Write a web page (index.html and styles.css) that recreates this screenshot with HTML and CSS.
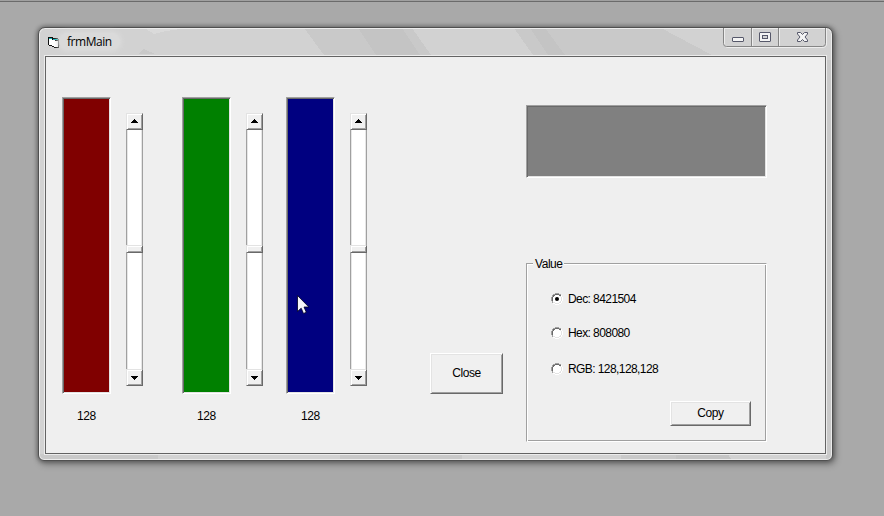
FILE: index.html
```html
<!DOCTYPE html>
<html lang="en">
<head>
<meta charset="utf-8">
<title>frmMain</title>
<link rel="stylesheet" href="styles.css">
</head>
<body>
<main class="window">
  <svg class="glass" width="791" height="430" viewBox="40 29 791 430" shape-rendering="crispEdges" aria-hidden="true">
    <path fill="#c9c9c9" d="M304 28H412L431 55H324ZM514 28H661L712 55H533ZM40 454H158V459H40ZM340 454H462V459H340ZM621 454H728L731 459H621ZM826 60H831V459H826Z"/>
    <path fill="#c4c4c4" d="M358 28H402L420 55H376ZM530 28H545L565 55H548ZM676 454H728L731 459H676Z"/>
    <path fill="#dadada" d="M146 29H180L166 31L154 34Z"/>
    <path fill="#c9c9c9" d="M138 54L144 49L155 54Z"/>
  </svg>
  <header class="titlebar">
    <svg class="app-icon" width="14" height="13" viewBox="0 0 14 13" shape-rendering="crispEdges" aria-hidden="true">
      <path fill="#888" d="M11 6h1v1h1v1h1v1h-1v1h-2z"/>
      <path fill="#111" d="M0 1h5v1h5v1h1v9H6v-1H4v-1H1V9H0z"/>
      <path fill="#fff" d="M1 3h3v1h3v1h3v6H6v-1H4V9H1z"/>
      <path fill="#12b5b5" d="M1 2h3v1H1zM5 3h5v1H5z"/>
    </svg>
    <h1 class="title">frmMain</h1>
    <svg class="caption-buttons" width="104" height="20" viewBox="0 0 104 20" role="img" aria-label="Minimize, maximize, close">
      <path fill="none" stroke="#ededed" d="M1.5 0V15Q1.5 19.5 5 19.5H99Q103.500 19.500 103.500 16V0M29.500 0V18M56.500 0V18"/>
      <path fill="none" stroke="#858585" d="M.5 0V15.500Q.5 18.500 3.500 18.500H99.500Q102.500 18.500 102.500 15.500V0M28.500 0V18M55.500 0V18"/>
      <g fill="#f4f4f4" stroke="#56586a">
        <rect x="9.500" y="9.500" width="11" height="4" rx=".5"/>
        <rect x="36.500" y="4.500" width="11" height="9" rx=".5"/>
        <rect x="39.500" y="7.500" width="5" height="3" fill="#d5d5d5"/>
        <path d="M74.500 4.500h3l2 2 2-2h3v1.500l-2.500 3 2.500 3v1.500h-3l-2-2-2 2h-3V12l2.500-3-2.500-3z"/>
      </g>
    </svg>
  </header>

  <section class="client">
    <div class="channel">
      <div class="swatch red"></div>
      <div class="value">128</div>
    </div>
    <div class="scrollbar">
      <div class="step up"></div><div class="track"><div class="thumb"></div></div><div class="step down"></div>
    </div>
    <div class="channel second">
      <div class="swatch green"></div>
      <div class="value">128</div>
    </div>
    <div class="scrollbar">
      <div class="step up"></div><div class="track"><div class="thumb"></div></div><div class="step down"></div>
    </div>
    <div class="channel third">
      <div class="swatch blue">
        <svg class="cursor" width="13" height="20" viewBox="0 0 13 20" aria-hidden="true">
          <path fill="#f6f6fa" stroke="#000020" stroke-width=".8" d="M.5.5V16.500L4.200 13.200 6.500 18.500 9.300 17.300 7 12H11.800Z"/>
        </svg>
      </div>
      <div class="value">128</div>
    </div>
    <div class="scrollbar">
      <div class="step up"></div><div class="track"><div class="thumb"></div></div><div class="step down"></div>
    </div>
    <button class="button close">Close</button>
    <div class="output">
      <div class="preview"></div>
      <div class="group" role="radiogroup" aria-label="Value">
        <div class="legend">Value</div>
        <div class="option"><svg width="12" height="12" viewBox="0 0 12 12"><use href="#radio"/><circle cx="6" cy="6" r="2"/></svg><span>Dec: 8421504</span></div>
        <div class="option hex"><svg width="12" height="12" viewBox="0 0 12 12"><use href="#radio"/></svg><span>Hex: 808080</span></div>
        <div class="option rgb"><svg width="12" height="12" viewBox="0 0 12 12"><use href="#radio"/></svg><span>RGB: 128,128,128</span></div>
        <button class="button copy">Copy</button>
      </div>
    </div>
  </section>
</main>
<svg class="defs" width="0" height="0" aria-hidden="true">
  <defs>
    <g id="radio" shape-rendering="crispEdges">
      <path fill="#fff" d="M4 1h4v1h2v2h1v4h-1v2H8v1H4v-1H2V8H1V4h1V2h2z"/>
      <path fill="#a0a0a0" d="M4 0h4v1h2v1H8V1H4v1H2v2H1v4h1v2H1V8H0V4h1V2h1V1h2z"/>
      <path fill="#696969" d="M4 1h4v1h2v1H8V2H4v1H3v1H2v4H1V4h1V2h2z"/>
      <path fill="#e3e3e3" d="M9 3h1v1h1v4h-1v2H8v1H4v-1H2V9h2v1h4V9h1V8h1V4H9z"/>
      <path fill="#fff" d="M10 2h1v2h1v4h-1v2h-1v1H8v1H4v-1H2v-1h2v1h4v-1h2V8h1V4h-1z"/>
    </g>
  </defs>
</svg>
</body>
</html>
```
FILE: styles.css
```css
* { box-sizing: border-box; }

body {
  margin: 0;
  width: 884px;
  height: 516px;
  overflow: hidden;
  padding: 25px 0 0 38px;
  border-top: 1px solid #a0a0a0;
  background: #a9a9a9;
  box-shadow: inset 0 1px #6b6b6b;
  font: 12px/14px "Liberation Sans", Arial, sans-serif;
  letter-spacing: -0.42px;
  color: #000;
}

.window {
  position: relative;
  width: 795px;
  height: 434px;
  margin-top: 1px;
  padding: 0 6px;
  border: 1px solid #505050;
  border-radius: 7px 7px 6px 6px;
  background: #d2d2d2;
  box-shadow: inset 0 0 0 1px #ececec, 0 0 4px 1px rgba(0, 0, 0, .35), 2px 3px 6px 1px rgba(0, 0, 0, .25);
}

.glass {
  position: absolute;
  left: 1px;
  top: 1px;
  border-radius: 5px;
}

.titlebar {
  position: relative;
  height: 28px;
  display: flex;
  align-items: flex-start;
}

.app-icon { margin: 8px 0 0 3px; }

.title {
  margin: 5px 0 0 -3px;
  padding: 0 8px;
  border-radius: 9px;
  background: #dadada;
  box-shadow: 0 0 4px 2px #dadada;
  font: 12px/17px "Open Sans", "Noto Sans", sans-serif;
  letter-spacing: -0.45px;
}

.caption-buttons {
  margin-left: auto;
  margin-right: -1px;
}

.client {
  position: relative;
  width: 781px;
  height: 398px;
  display: flex;
  align-items: flex-start;
  padding: 40px 0 0 16px;
  border: 1px solid #636363;
  background: #efefef;
  box-shadow: 0 0 0 1px #ececec;
}

.channel { width: 49px; }
.second, .third { margin-left: 39px; }
.third { margin-left: 23px; }

.swatch, .preview {
  border: 1px solid;
  border-color: #a0a0a0 #fff #fff #a0a0a0;
  box-shadow: inset 1px 1px #696969, inset -1px -1px #e3e3e3;
}

.swatch {
  position: relative;
  height: 297px;
}

.red { background: #800000; }
.green { background: #008000; }
.blue { background: #000080; }

.cursor {
  position: absolute;
  left: 10px;
  top: 197px;
}

.value {
  margin-top: 15px;
  text-align: center;
}

.scrollbar {
  width: 17px;
  height: 273px;
  margin: 16px 0 0 15px;
  display: flex;
  flex-direction: column;
}

.step, .thumb {
  background: #f0f0f0;
  border: 1px solid;
  border-color: #e3e3e3 #696969 #696969 #e3e3e3;
  box-shadow: inset 1px 1px #fff, inset -1px -1px #a0a0a0;
}

.step {
  height: 17px;
  display: flex;
  justify-content: center;
  padding-top: 5px;
}

.down { padding-top: 6px; }

.step::before {
  content: "";
  width: 7px;
  height: 4px;
  background: #000;
  clip-path: polygon(3px 0, 4px 0, 4px 1px, 5px 1px, 5px 2px, 6px 2px, 6px 3px, 7px 3px, 7px 4px, 0 4px, 0 3px, 1px 3px, 1px 2px, 2px 2px, 2px 1px, 3px 1px);
}

.down::before { transform: scaleY(-1); }

.track {
  flex: 1;
  padding-top: 115px;
  background: #fff;
  box-shadow: inset 1px 0 #a0a0a0, inset -1px 0 #a0a0a0, inset 2px 0 #e6e6e6, inset -2px 0 #e6e6e6;
}

.thumb { height: 8px; }

.button {
  padding: 0 0 2px;
  background: #f0f0f0;
  border: 1px solid;
  border-color: #fff #696969 #696969 #fff;
  border-radius: 0;
  box-shadow: inset 1px 1px #e3e3e3, inset -1px -1px #a0a0a0;
  color: inherit;
  font: inherit;
  letter-spacing: inherit;
}

.close {
  width: 73px;
  height: 41px;
  margin: 256px 0 0 63px;
}

.output {
  width: 241px;
  margin: 8px 0 0 23px;
}

.preview {
  height: 73px;
  background: #808080;
}

.group {
  height: 179px;
  margin-top: 85px;
  padding-left: 24px;
  border: 1px solid;
  border-color: #a0a0a0 #fff #fff #a0a0a0;
  box-shadow: inset 1px 1px #fff, inset -1px -1px #a0a0a0;
}

.legend {
  width: 31px;
  margin: -7px 0 0 -18px;
  padding-left: 2px;
  background: #efefef;
  letter-spacing: -0.45px;
}

.option {
  height: 14px;
  margin-top: 21px;
  display: flex;
  align-items: center;
  gap: 5px;
  letter-spacing: -0.58px;
}

.hex { margin-top: 20px; }
.rgb { margin-top: 22px; }

.copy {
  display: block;
  width: 81px;
  height: 25px;
  margin: 25px 0 0 119px;
}

.defs { display: block; }
```
